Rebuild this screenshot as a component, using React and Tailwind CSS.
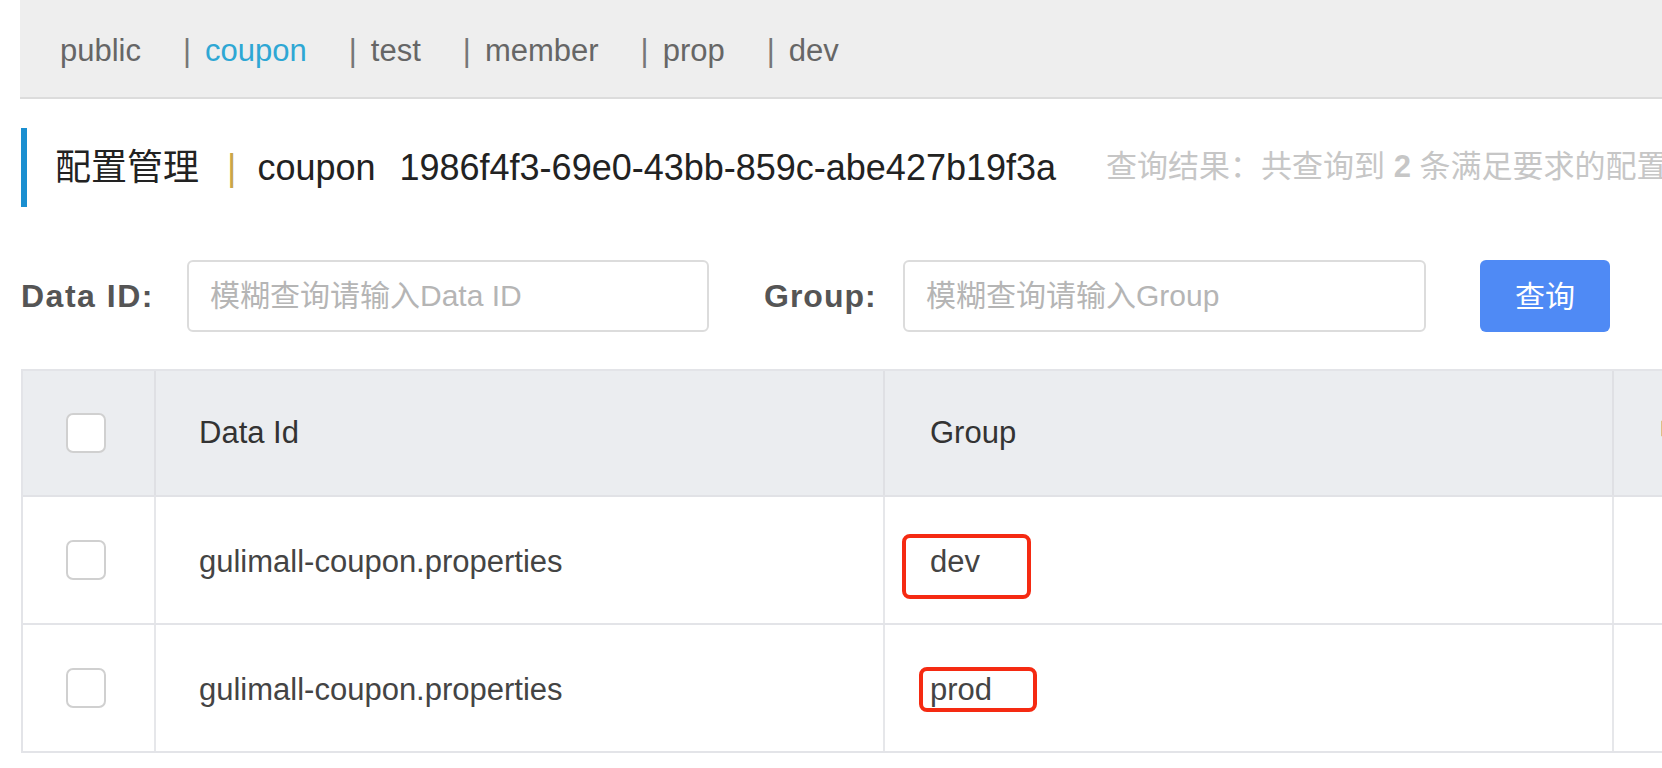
import React from "react";

const FONT = { fontFamily: '"Liberation Sans", "Noto Sans CJK SC", sans-serif' };

const NAMESPACES = ["public", "coupon", "test", "member", "prop", "dev"];

const ROWS = [
  { id: "gulimall-coupon.properties", group: "dev", mark: "left-[17px] top-[37px] w-[129px] h-[65px]" },
  { id: "gulimall-coupon.properties", group: "prod", mark: "left-[34px] top-[42px] w-[118px] h-[45px]" },
];

function Checkbox() {
  return <div className="w-[40px] h-[40px] rounded-[7px] border-2 border-[#d0d0d0] bg-white" />;
}

export default function App() {
  return (
    <div className="w-[1662px] h-[768px] bg-white overflow-hidden text-[#333]" style={FONT}>
      {/* namespace bar */}
      <div className="ml-[20px] h-[99px] bg-[#eeeeee] border-b-2 border-[#dcdcdc] flex items-center pl-[40px] pt-[6px] text-[31px] text-[#666] whitespace-nowrap">
        {NAMESPACES.map((ns, i) => (
          <div key={ns} className="flex items-center">
            {i > 0 && <span className="mr-[14px] text-[#777]">|</span>}
            <span className={`${ns === "coupon" ? "text-[#2ea7d4]" : ""} ${i < NAMESPACES.length - 1 ? "mr-[42px]" : ""}`}>{ns}</span>
          </div>
        ))}
      </div>

      {/* title */}
      <div className="mt-[29px] ml-[21px] h-[79px] border-l-[6px] border-[#1a8fd0] flex items-center pl-[28px] whitespace-nowrap">
        <span className="text-[36px] text-[#222]">配置管理</span>
        <span className="ml-[28px] mr-[21px] text-[36px] text-[#c9a64a]">|</span>
        <span className="text-[36px] text-[#222]">coupon</span>
        <span className="ml-[24px] text-[36px] text-[#222]">1986f4f3-69e0-43bb-859c-abe427b19f3a</span>
        <span className="ml-[50px] text-[31px] text-[#c6c6c6]">
          查询结果：共查询到 <strong className="font-bold">2</strong> 条满足要求的配置。
        </span>
      </div>

      {/* search */}
      <div className="mt-[53px] pl-[21px] flex items-center whitespace-nowrap">
        <label className="w-[166px] text-[32px] font-bold tracking-[1.5px] text-[#555]">Data ID:</label>
        <input
          placeholder="模糊查询请输入Data ID"
          className="w-[522px] h-[72px] rounded-[6px] border-2 border-[#dcdcdc] px-[21px] text-[30px] placeholder:text-[#b5b5b5] outline-none"
        />
        <label className="ml-[55px] w-[139px] text-[32px] font-bold tracking-[1px] text-[#555]">Group:</label>
        <input
          placeholder="模糊查询请输入Group"
          className="w-[523px] h-[72px] rounded-[6px] border-2 border-[#dcdcdc] px-[21px] text-[30px] placeholder:text-[#b5b5b5] outline-none"
        />
        <button className="ml-[54px] w-[130px] h-[72px] rounded-[6px] bg-[#4f8af5] text-white text-[30px]">查询</button>
      </div>

      {/* table */}
      <div className="mt-[37px] ml-[21px] w-max border-t-2 border-l-2 border-[#e3e4e8] text-[31px]">
        <div className="grid grid-cols-[133px_729px_729px_400px] h-[126px] bg-[#ebedf0] border-b-2 border-[#e1e2e6]">
          <div className="flex items-center pl-[43px] border-r-2 border-[#dfe0e4]"><Checkbox /></div>
          <div className="flex items-center pl-[43px] border-r-2 border-[#dfe0e4]">Data Id</div>
          <div className="flex items-center pl-[45px] border-r-2 border-[#dfe0e4]">Group</div>
          <div className="flex items-center pl-[45px]">归属应用</div>
        </div>
        {ROWS.map((r) => (
          <div key={r.group} className="grid grid-cols-[133px_729px_729px_400px] h-[128px] border-b-2 border-[#e3e4e8]">
            <div className="flex items-center pl-[43px] border-r-2 border-[#e6e7ea]"><Checkbox /></div>
            <div className="flex items-center pl-[43px] pt-[5px] border-r-2 border-[#e6e7ea] text-[#444]">{r.id}</div>
            <div className="relative flex items-center pl-[45px] pt-[5px] border-r-2 border-[#e6e7ea] text-[#444]">
              {r.group}
              <div className={`absolute ${r.mark} border-[4px] border-[#f52a12] rounded-[8px]`} />
            </div>
            <div />
          </div>
        ))}
      </div>
    </div>
  );
}
